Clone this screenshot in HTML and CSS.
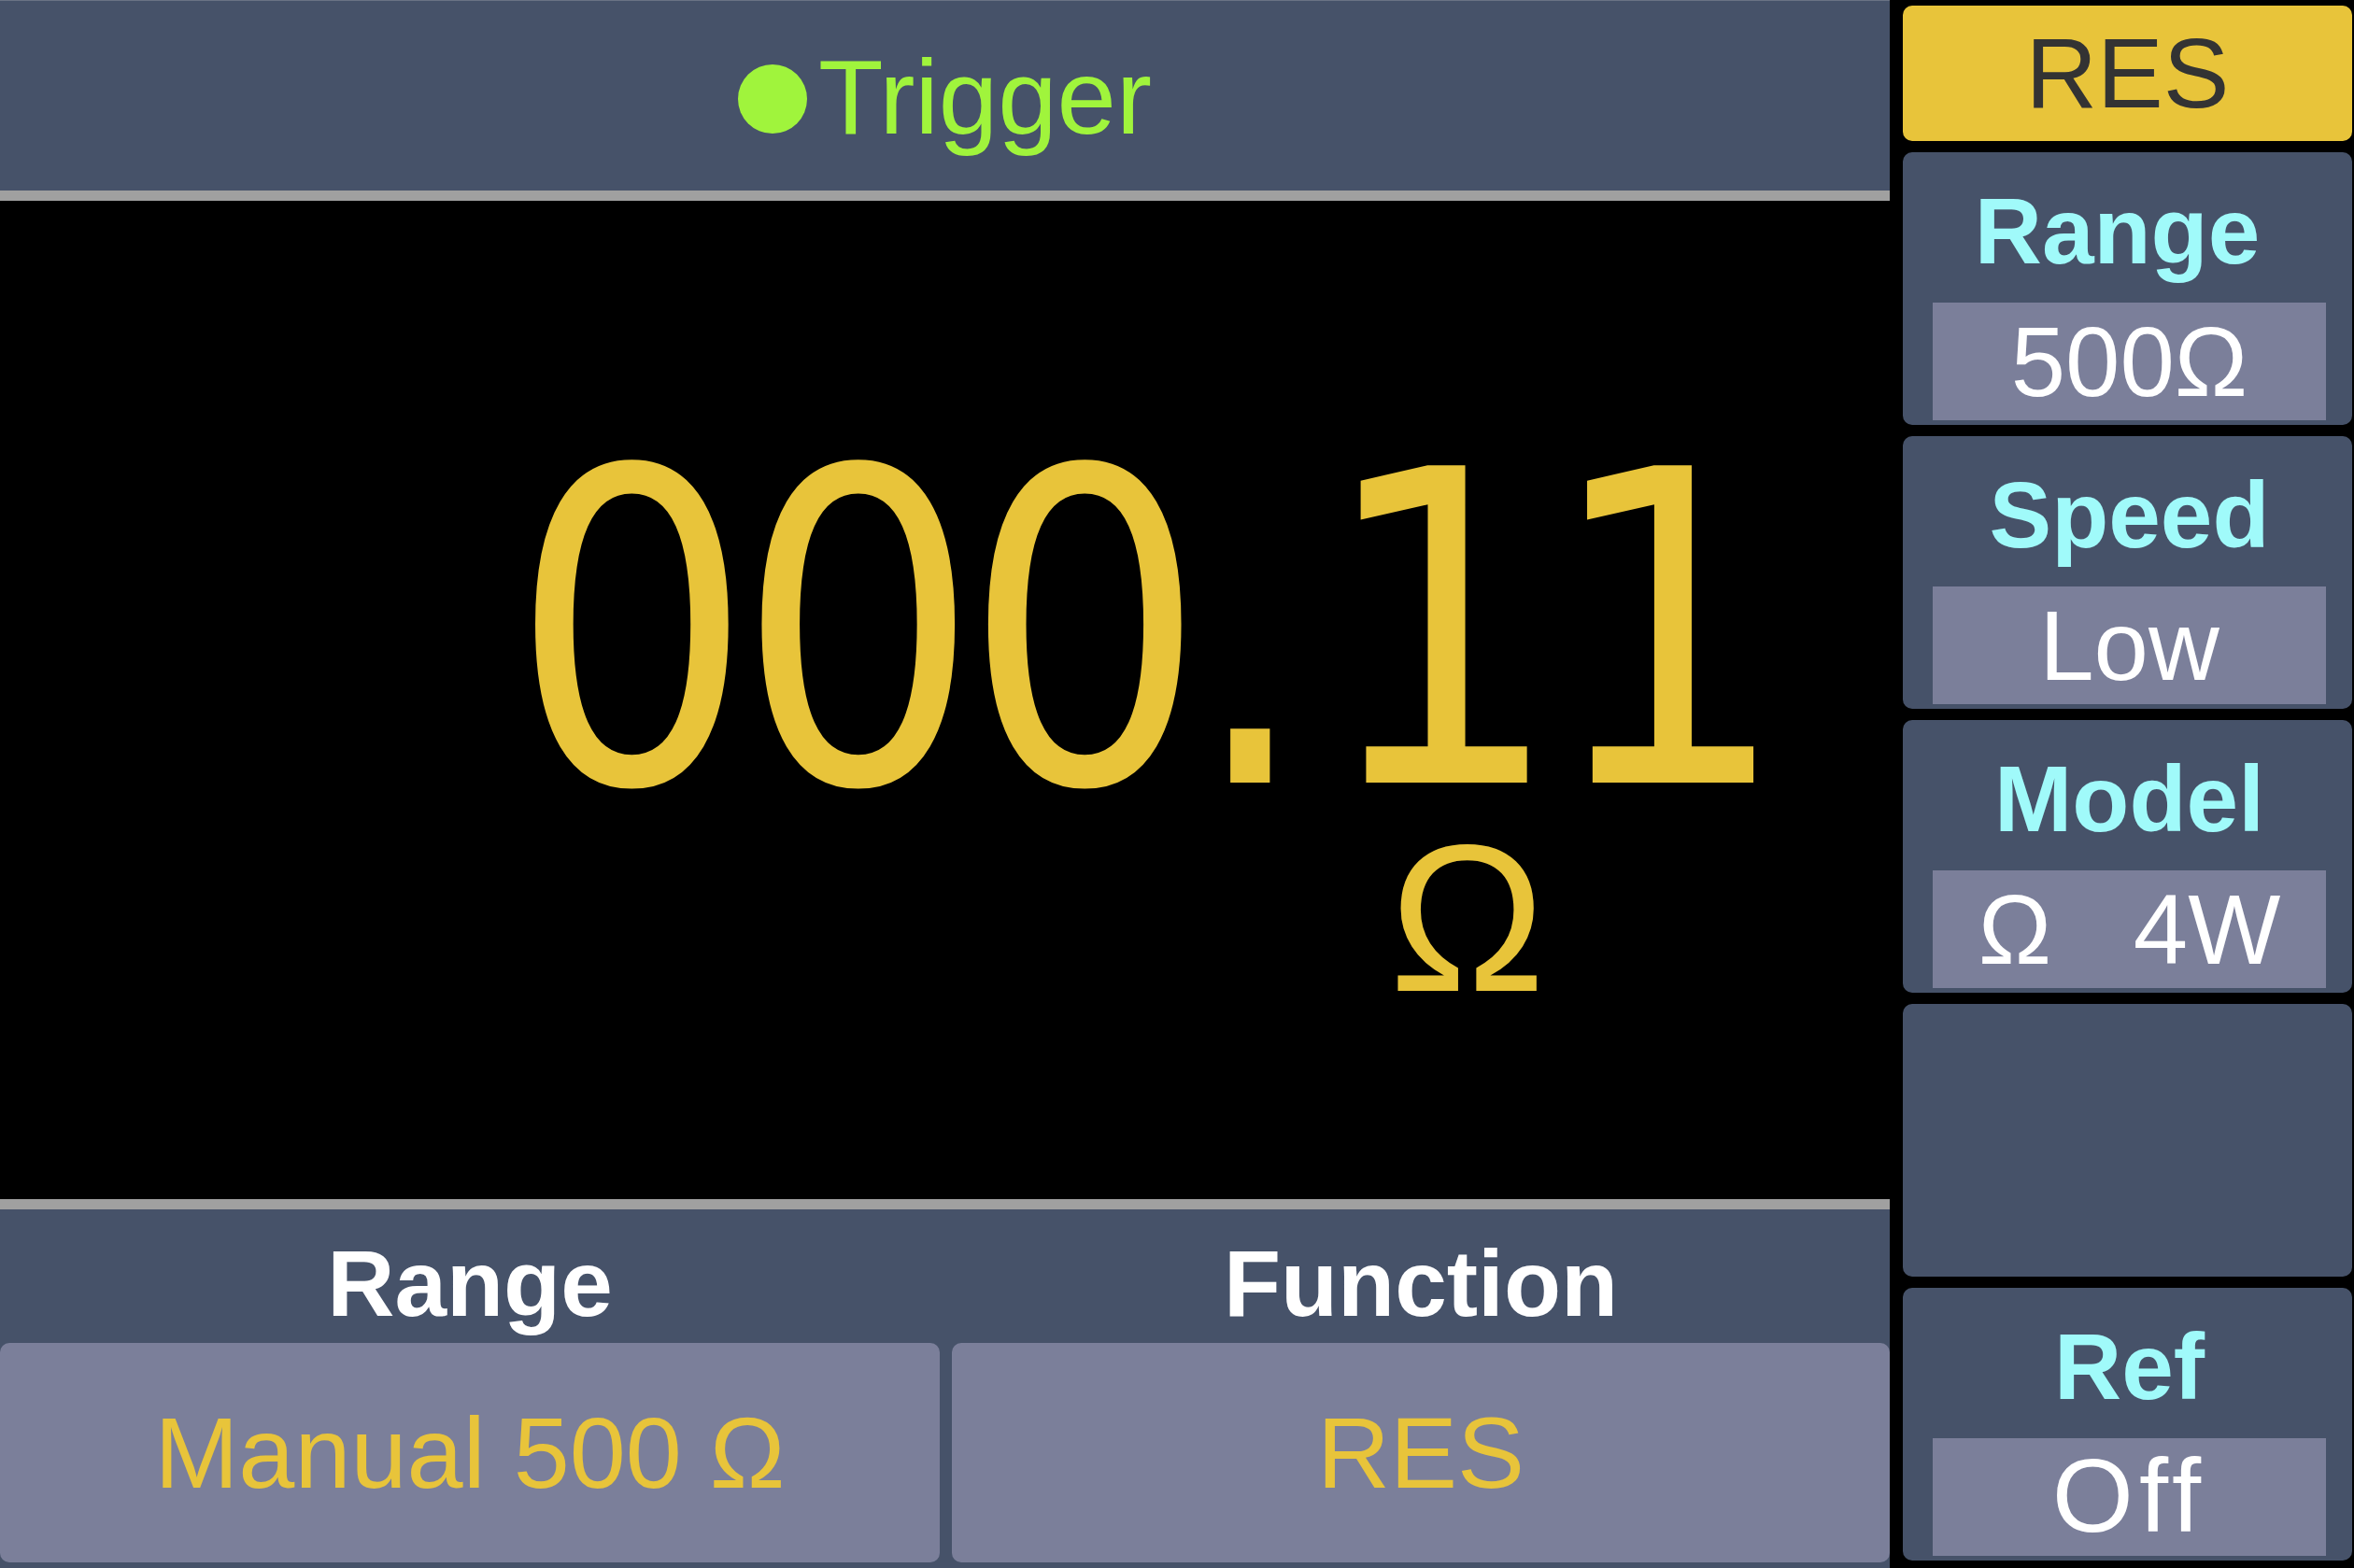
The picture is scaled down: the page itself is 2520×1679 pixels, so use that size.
FILE: index.html
```html
<!DOCTYPE html>
<html lang="en">
<head>
<meta charset="utf-8">
<title>RES meter</title>
<link rel="stylesheet" href="styles.css">
</head>
<body>
<div class="screen">
  <div class="main">
    <header class="topbar">
      <div class="trigger"><span class="trigger-dot"></span><span class="trigger-label">Trigger</span></div>
    </header>
    <section class="display">
      <div class="reading">000<span class="point">.</span>11</div>
      <div class="unit">Ω</div>
    </section>
    <section class="status">
      <div class="status-label">Range</div>
      <div class="status-label">Function</div>
      <div class="status-value">Manual 500 Ω</div>
      <div class="status-value">RES</div>
    </section>
  </div>
  <aside class="softkeys">
    <div class="mode">RES</div>
    <div class="card">
      <div class="card-title card-title-range">Range</div>
      <div class="card-value">500Ω</div>
    </div>
    <div class="card">
      <div class="card-title">Speed</div>
      <div class="card-value">Low</div>
    </div>
    <div class="card">
      <div class="card-title">Model</div>
      <div class="card-value card-value-pre">Ω   4W</div>
    </div>
    <div class="card"></div>
    <div class="card">
      <div class="card-title">Ref</div>
      <div class="card-value card-value-big">Off</div>
    </div>
  </aside>
</div>
</body>
</html>
```

FILE: styles.css
```css
* {
  box-sizing: border-box;
}

html, body {
  margin: 0;
  padding: 0;
  background: #000;
}

body {
  width: 2520px;
  height: 1679px;
  overflow: hidden;
  font-family: "Liberation Sans", Arial, sans-serif;
}

.screen {
  display: flex;
  width: 2520px;
  height: 1679px;
  background: #000;
}

.main {
  width: 2023px;
  display: flex;
  flex-direction: column;
}

.topbar {
  height: 215px;
  background: #465269;
  border-top: 1px solid #6a7385;
  border-bottom: 11px solid #a0a0a0;
  display: flex;
  align-items: center;
  justify-content: center;
}

.trigger {
  display: flex;
  align-items: baseline;
  gap: 12px;
  color: #a0f43c;
  font-size: 114px;
  line-height: 114px;
  margin-top: 2px;
}

.trigger-dot {
  width: 74px;
  height: 74px;
  border-radius: 50%;
  background: #a0f43c;
}

.display {
  flex: 1;
  background: #000;
  padding-top: 262px;
  padding-left: 546px;
  color: #e8c43a;
}

.reading {
  font-family: "DejaVu Sans", sans-serif;
  font-size: 466px;
  line-height: 400px;
  letter-spacing: -21px;
  white-space: nowrap;
  transform: scaleX(0.88);
  transform-origin: left center;
}

.point {
  margin-right: 30px;
}

.unit {
  font-family: "Liberation Sans", Arial, sans-serif;
  font-size: 224px;
  line-height: 180px;
  margin-top: 16px;
  padding-left: 941px;
}

.status {
  height: 395px;
  background: #465269;
  border-top: 11px solid #a0a0a0;
  padding-top: 29px;
  display: grid;
  grid-template-columns: 1006px 1004px;
  grid-template-rows: 100px 235px;
  column-gap: 13px;
  row-gap: 14px;
}

.status-label {
  color: #fff;
  font-weight: bold;
  font-size: 100px;
  line-height: 100px;
  text-align: center;
}

.status-value {
  background: #7b7f9a;
  border-radius: 10px;
  color: #e8c43a;
  font-size: 108px;
  display: flex;
  align-items: center;
  justify-content: center;
  white-space: nowrap;
}

.softkeys {
  flex: 1;
  display: flex;
  flex-direction: column;
  gap: 12px;
  padding: 6px 2px 0 14px;
}

.mode {
  height: 145px;
  background: #e8c43a;
  border-radius: 10px;
  color: #333333;
  font-size: 106px;
  display: flex;
  align-items: center;
  justify-content: center;
}

.card {
  height: 292px;
  background: #465269;
  border-radius: 10px;
  display: flex;
  flex-direction: column;
  padding: 34px 28px 5px 32px;
}

.card-title {
  color: #a0fafa;
  font-weight: bold;
  font-size: 100px;
  line-height: 100px;
  text-align: center;
}

.card-title-range {
  padding-right: 26px;
}

.card-value {
  margin-top: auto;
  height: 126px;
  background: #7b7f9a;
  color: #fff;
  font-size: 105px;
  line-height: 128px;
  text-align: center;
  white-space: nowrap;
  overflow: hidden;
}

.card-value-pre {
  white-space: pre;
}

.card-value-big {
  font-size: 112px;
  line-height: 124px;
  letter-spacing: 6px;
}
```
